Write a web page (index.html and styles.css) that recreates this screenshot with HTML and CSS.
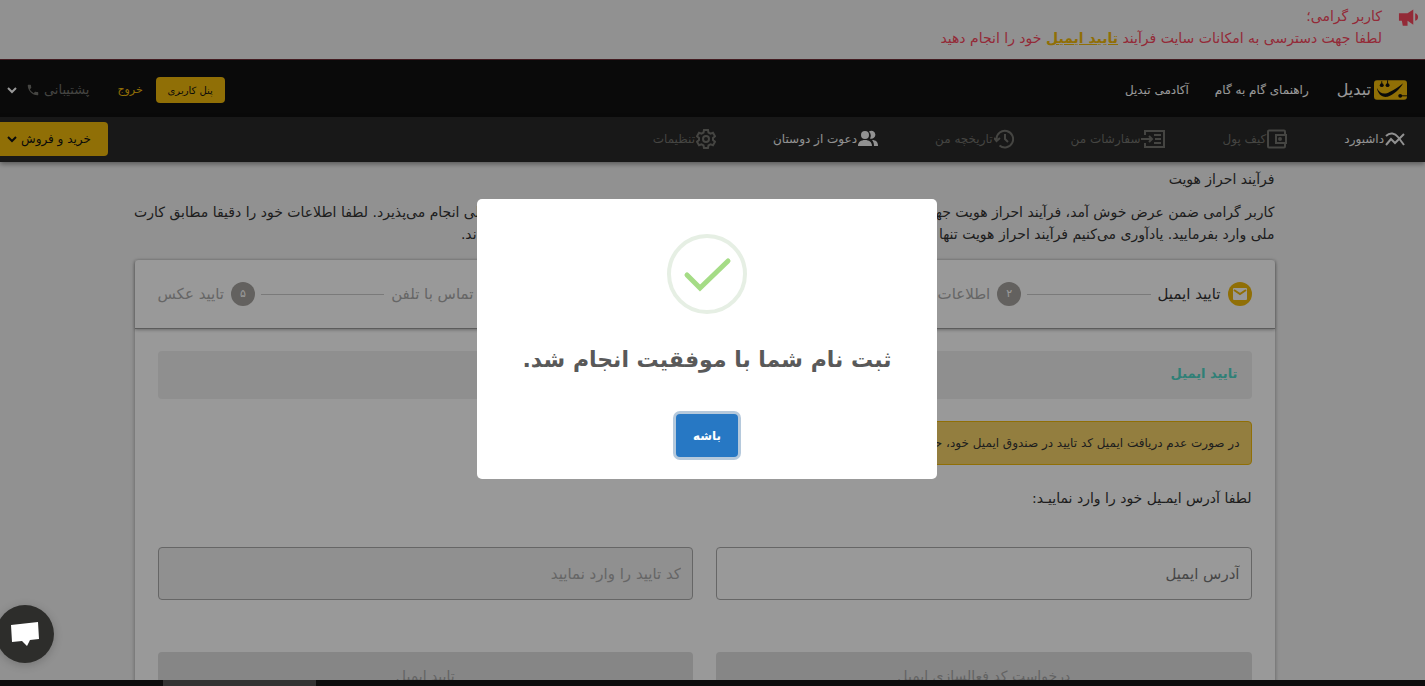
FILE: index.html
```html
<!DOCTYPE html>
<html lang="fa" dir="rtl">
<head>
    <meta charset="UTF-8">
    <meta name="viewport" content="width=device-width, initial-scale=1.0">
    <title>احراز هویت - تبدیل</title>
    <link rel="stylesheet" href="styles.css">
</head>
<body>
    <div class="notice">
        <svg class="notice-icon" viewBox="0 0 22 18">
            <path d="M1 4h9l6-4v16l-6-4v5H5l-1-5H1z"/>
            <path d="M18 4c4 1 4 7 0 8z"/>
        </svg>
        <div>
            <p>کاربر گرامی؛</p>
            <p>لطفا جهت دسترسی به امکانات سایت فرآیند <a href="#email">تایید ایمیل</a> خود را انجام دهید</p>
        </div>
    </div>

    <header class="topbar">
        <a class="brand" href="#">
            <svg viewBox="0 0 34 20">
                <rect width="34" height="20" rx="3" fill="#f0b90b"/>
                <path d="M3 8c3 6 8 7 13 4 5-2 9-5 14-9-4 7-9 11-16 14C8 18 4 14 3 8z" fill="#111"/>
                <circle cx="8" cy="5" r="2" fill="#111"/>
                <circle cx="14" cy="5" r="2" fill="#111"/>
                <circle cx="27" cy="16" r="2" fill="#111"/>
                <path d="M8 5V1M14 5V0M27 16h7" stroke="#111" fill="none"/>
            </svg>
            <span>تبدیل</span>
        </a>
        <nav class="main-links">
            <a href="#">راهنمای گام به گام</a>
            <a href="#">آکادمی تبدیل</a>
        </nav>
        <div class="account">
            <button type="button" class="panel-btn">پنل کاربری</button>
            <a class="logout" href="#">خروج</a>
            <a class="support" href="#">
                <span>پشتیبانی</span>
                <svg class="phone" viewBox="0 0 24 24"><path d="M6.600 10.800c1.400 2.800 3.800 5.100 6.600 6.600l2.200-2.200c.3-.3.700-.4 1-.2 1.100.4 2.300.6 3.600.6.600 0 1 .4 1 1V20c0 .600-.4 1-1 1C10.600 21 3 13.400 3 4c0-.6.500-1 1-1h3.500c.600 0 1 .400 1 1 0 1.200.2 2.400.6 3.600.1.300 0 .7-.3 1z"/></svg>
            </a>
            <svg class="chevron" viewBox="0 0 12 8"><path d="M2 2l4 4 4-4"/></svg>
        </div>
    </header>

    <nav class="subnav">
        <div class="subnav-links">
            <a class="active" href="#">
                <svg class="outline" viewBox="0 0 20 20"><path d="M1 16l5-6 4 4 9-9M1 7c4-4 9-3 12 1l6 8"/></svg>
                داشبورد
            </a>
            <a href="#">
                <svg class="outline" viewBox="0 0 20 20"><path d="M18 6V2.500a1 1 0 0 0-1-1H2a1 1 0 0 0-1 1v15a1 1 0 0 0 1 1h15a1 1 0 0 0 1-1V14M9 6h10v8H9z"/><circle cx="13" cy="10" r="1"/></svg>
                کیف پول
            </a>
            <a href="#">
                <svg class="outline wide" viewBox="0 0 24 20"><path d="M4 6V2h19v16H4v-4M0 10h11M8 7l3 3-3 3M13 6h7M14 10h6M13 14h7"/></svg>
                سفارشات من
            </a>
            <a href="#">
                <svg class="outline" viewBox="0 0 20 20"><path d="M2.500 10a8.300 8.300 0 1 1 3 6.500M0 9l2.500 3L6 9M11 5v5l3 3"/></svg>
                تاریخچه من
            </a>
            <a class="active" href="#">
                <svg class="solid" viewBox="0 0 20 20"><circle cx="7" cy="6" r="4"/><path d="M0 17c0-4 3-6 7-6s7 2 7 6zM11 2.500a4 4 0 1 1 1 7 6 6 0 0 0-1-7zM14 11c4 0 6 2 6 6h-4c0-3-1-5-2-6z"/></svg>
                دعوت از دوستان
            </a>
            <a href="#">
                <svg class="outline" viewBox="0 0 20 20"><path d="M8 1h4l.5 2.500 2 1.200 2.500-1 2 3.500-2 1.700v2.200l2 1.700-2 3.500-2.500-1-2 1.200L12 19H8l-.5-2.500-2-1.200-2.500 1-2-3.500 2-1.700V8.900L1 7.200l2-3.500 2.500 1 2-1.200z"/><circle cx="10" cy="10" r="3"/></svg>
                تنظیمات
            </a>
        </div>
        <button type="button" class="trade-btn">
            خرید و فروش
            <svg class="chevron" viewBox="0 0 12 8"><path d="M2 2l4 4 4-4"/></svg>
        </button>
    </nav>

    <main>
        <h1>فرآیند احراز هویت</h1>
        <p class="intro">
            کاربر گرامی ضمن عرض خوش آمد، فرآیند احراز هویت جهت ارائه خدمات بهتر و امن‌تر به شما و جلوگیری از ثبت نام کاربران با هویت جعلی انجام می‌پذیرد. لطفا اطلاعات خود را دقیقا مطابق کارت<br>
            ملی وارد بفرمایید. یادآوری می‌کنیم فرآیند احراز هویت تنها از طریق همین سایت انجام شده و اطلاعات شما نیز نزد ما کاملا محفوظ مانده‌اند.
        </p>

        <section class="card">
            <ol class="steps">
                <li class="current">
                    <span class="dot">
                        <svg viewBox="0 0 24 24"><path d="M5 7a1 1 0 0 1 1-1h12a1 1 0 0 1 1 1v10a1 1 0 0 1-1 1H6a1 1 0 0 1-1-1z" fill="#fff"/><path d="M6 8l6 4 6-4" fill="none" stroke="#f0b90b" stroke-width="2"/></svg>
                    </span>
                    تایید ایمیل
                </li>
                <li><span class="dot">۲</span>اطلاعات فردی</li>
                <li><span class="dot">۳</span>اطلاعات بانکی</li>
                <li><span class="dot">۴</span>تماس با تلفن</li>
                <li><span class="dot">۵</span>تایید عکس</li>
            </ol>

            <form class="card-body" id="email">
                <h2>تایید ایمیل</h2>
                <div class="warning">در صورت عدم دریافت ایمیل کد تایید در صندوق ایمیل خود، حتما پوشه اسپم را بررسی نمایید.</div>
                <label class="prompt" for="address">لطفا آدرس ایمـیل خود را وارد نماییـد:</label>
                <div class="fields">
                    <input type="email" id="address" placeholder="آدرس ایمیل">
                    <input type="text" id="code" placeholder="کد تایید را وارد نمایید" aria-label="کد تایید" disabled>
                    <button type="button" disabled>درخواست کد فعالسازی ایمیل</button>
                    <button type="submit" disabled>تایید ایمیل</button>
                </div>
            </form>
        </section>
    </main>

    <div class="overlay">
        <div class="modal" role="dialog" aria-labelledby="modalTitle">
            <svg class="success" viewBox="0 0 80 80">
                <circle cx="40" cy="40" r="38" fill="none" stroke="#e6efe4" stroke-width="4"/>
                <path d="M20 41l13 13 28-27" fill="none" stroke="#a5dc86" stroke-width="5" stroke-linecap="round"/>
            </svg>
            <h2 id="modalTitle">ثبت نام شما با موفقیت انجام شد.</h2>
            <button type="button" class="confirm">باشه</button>
        </div>
    </div>

    <button type="button" class="chat" aria-label="گفتگو">
        <svg viewBox="0 0 30 26"><path d="M1 4l27-3 1 17-9 1-3 6-5-5-10 1z" fill="#fff"/></svg>
    </button>
    <div class="scrollbar"><span></span></div>
</body>
</html>
```
FILE: styles.css
```css
* {
    margin: 0;
    padding: 0;
    box-sizing: border-box;
}

body {
    font-family: 'DejaVu Sans', sans-serif;
    font-size: 14px;
    line-height: 22px;
    background: #f2f2f2;
    color: #333;
    height: 100vh;
    overflow: hidden;
}

a {
    color: inherit;
    text-decoration: none;
}

button,
input {
    font-family: inherit;
    border: none;
}

/* notice */
.notice {
    display: flex;
    gap: 16px;
    padding: 5px 6px 10px;
    color: #f6465d;
    border-bottom: 1px solid #703038;
}

.notice-icon {
    width: 21px;
    height: 18px;
    margin-top: 4px;
    fill: currentColor;
}

.notice a {
    color: #f0b90b;
    font-weight: bold;
    text-decoration: underline;
}

/* header */
.topbar {
    display: flex;
    align-items: center;
    height: 57px;
    padding: 3px 18px 0 6px;
    background: #111;
    color: #fff;
    font-size: 12px;
}

.brand {
    display: flex;
    align-items: center;
    gap: 3px;
    font-size: 16px;
}

.brand svg {
    width: 33px;
    height: 20px;
}

.main-links {
    display: flex;
    gap: 26px;
    margin-right: 28px;
}

.account {
    display: flex;
    align-items: center;
    margin-right: auto;
}

.panel-btn {
    width: 69px;
    height: 26px;
    border-radius: 4px;
    background: #f0b90b;
    color: #111;
    font-size: 10px;
}

.logout {
    margin: 0 13px 0 28px;
    color: #f0b90b;
    font-size: 11px;
}

.support {
    display: flex;
    align-items: center;
    gap: 4px;
    color: #73736e;
    font-size: 13px;
}

.phone {
    width: 14px;
    height: 14px;
    fill: currentColor;
}

.chevron {
    width: 12px;
    height: 8px;
    fill: none;
    stroke: currentColor;
    stroke-width: 2;
}

.account .chevron {
    margin-right: 8px;
}

.subnav {
    display: flex;
    align-items: center;
    justify-content: space-between;
    height: 45px;
    padding: 0 20px 1px 0;
    background: #282828;
    color: #73736e;
    font-size: 12px;
    box-shadow: 0 2px 5px rgba(0, 0, 0, 0.4);
}

.subnav-links {
    display: flex;
    gap: 57px;
}

.subnav a {
    display: flex;
    align-items: center;
    gap: 1px;
}

.subnav a.active {
    color: #f2f2f2;
}

.subnav a svg {
    width: 20px;
    height: 20px;
}

.subnav a svg.wide {
    width: 24px;
}

.outline {
    fill: none;
    stroke: currentColor;
    stroke-width: 2;
}

.solid {
    fill: currentColor;
}

.trade-btn {
    display: flex;
    align-items: center;
    gap: 3px;
    height: 34px;
    padding: 0 17px 0 6px;
    border-radius: 0 4px 4px 0;
    background: #f0b90b;
    color: #111;
    font-size: 12px;
}

/* content */
main {
    max-width: 1170px;
    margin: 0 auto;
    padding: 6px 23px 0 7px;
}

h1 {
    font-size: 14px;
    font-weight: normal;
    margin-bottom: 11px;
}

.intro {
    margin-bottom: 15px;
    white-space: nowrap;
}

.card {
    background: #fff;
    border-radius: 4px;
    box-shadow: 0 1px 4px rgba(0, 0, 0, 0.35);
}

.steps {
    display: flex;
    align-items: center;
    height: 69px;
    padding: 0 23px;
    list-style: none;
    border-bottom: 1px solid #999;
    box-shadow: 0 1px 3px rgba(0, 0, 0, 0.3);
    color: #aaa;
    font-size: 15px;
}

.steps li {
    display: flex;
    align-items: center;
    gap: 7px;
    flex: 1 0 auto;
}

.steps li:last-child {
    flex: none;
}

.steps li:not(:last-child)::after {
    content: "";
    flex: 1;
    height: 1px;
    margin-left: 6px;
    background: #ccc;
}

.steps .current {
    color: #333;
}

.dot {
    width: 24px;
    height: 24px;
    border-radius: 50%;
    background: #a5a29e;
    color: #fff;
    font-size: 11px;
    line-height: 24px;
    text-align: center;
}

.current .dot {
    background: #f0b90b;
}

.card-body {
    padding: 22px 23px;
}

.card-body h2 {
    height: 48px;
    padding: 0 14px;
    margin-bottom: 22px;
    border-radius: 4px;
    background: #efefef;
    color: #4fd5c6;
    font-size: 13px;
    line-height: 46px;
}

.warning {
    width: fit-content;
    height: 44px;
    padding: 0 11px;
    margin-bottom: 22px;
    border: 1px solid #f0b90b;
    border-radius: 4px;
    background: #f5d36a;
    font-size: 12px;
    line-height: 42px;
}

.prompt {
    display: block;
}

.fields {
    display: grid;
    grid-template-columns: 1fr 1fr;
    column-gap: 23px;
    row-gap: 52px;
    margin-top: 38px;
}

.fields input {
    height: 53px;
    padding: 0 11px;
    border: 1px solid #aaa;
    border-radius: 4px;
    background: #fff;
    font-size: 15px;
    text-align: right;
}

.fields input::placeholder {
    color: #777;
}

.fields input:disabled {
    background: #f0f0f0;
}

.fields input:disabled::placeholder {
    color: #aaa;
}

.fields button {
    height: 48px;
    border-radius: 4px;
    background: #e0e0e0;
    color: #a6a6a6;
    font-size: 14px;
}

/* modal */
.overlay {
    position: fixed;
    inset: 0;
    display: flex;
    align-items: center;
    justify-content: center;
    padding: 0 11px 8px 0;
    background: rgba(0, 0, 0, 0.4);
}

.modal {
    display: flex;
    flex-direction: column;
    align-items: center;
    width: 460px;
    padding: 35px 20px 22px;
    border-radius: 5px;
    background: #fff;
}

.success {
    width: 80px;
    height: 80px;
}

.modal h2 {
    margin: 26px 0 34px;
    color: #595959;
    font-size: 22px;
    line-height: 40px;
    white-space: nowrap;
}

.confirm {
    width: 62px;
    height: 43px;
    border-radius: 4px;
    background: #2778c4;
    box-shadow: 0 0 0 3px #b5c9dc;
    color: #fff;
    font-size: 12px;
    font-weight: bold;
}

.chat {
    position: fixed;
    left: -4px;
    bottom: 23px;
    width: 58px;
    height: 58px;
    border-radius: 50%;
    background: #2d2d2b;
    box-shadow: 0 2px 10px rgba(0, 0, 0, 0.2);
}

.chat svg {
    width: 30px;
    height: 26px;
    vertical-align: middle;
}

.scrollbar {
    position: fixed;
    left: 0;
    right: 0;
    bottom: 0;
    height: 6px;
    padding-left: 163px;
    background: #0d0d0d;
    direction: ltr;
}

.scrollbar span {
    display: block;
    width: 153px;
    height: 6px;
    background: #333;
}
```
